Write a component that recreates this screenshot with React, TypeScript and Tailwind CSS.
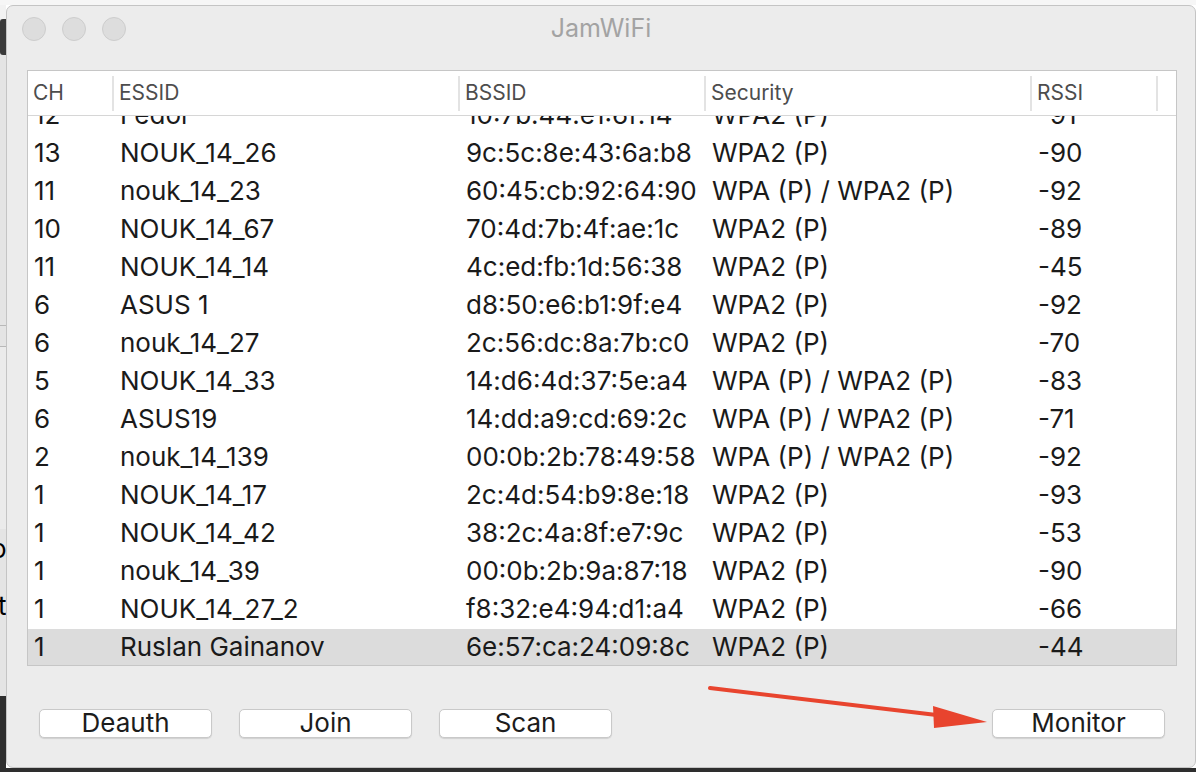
const rows = [
  ['12', 'Fedor', '10:7b:44:e1:6f:14', 'WPA2 (P)', '-91'],
  ['13', 'NOUK_14_26', '9c:5c:8e:43:6a:b8', 'WPA2 (P)', '-90'],
  ['11', 'nouk_14_23', '60:45:cb:92:64:90', 'WPA (P) / WPA2 (P)', '-92'],
  ['10', 'NOUK_14_67', '70:4d:7b:4f:ae:1c', 'WPA2 (P)', '-89'],
  ['11', 'NOUK_14_14', '4c:ed:fb:1d:56:38', 'WPA2 (P)', '-45'],
  ['6', 'ASUS 1', 'd8:50:e6:b1:9f:e4', 'WPA2 (P)', '-92'],
  ['6', 'nouk_14_27', '2c:56:dc:8a:7b:c0', 'WPA2 (P)', '-70'],
  ['5', 'NOUK_14_33', '14:d6:4d:37:5e:a4', 'WPA (P) / WPA2 (P)', '-83'],
  ['6', 'ASUS19', '14:dd:a9:cd:69:2c', 'WPA (P) / WPA2 (P)', '-71'],
  ['2', 'nouk_14_139', '00:0b:2b:78:49:58', 'WPA (P) / WPA2 (P)', '-92'],
  ['1', 'NOUK_14_17', '2c:4d:54:b9:8e:18', 'WPA2 (P)', '-93'],
  ['1', 'NOUK_14_42', '38:2c:4a:8f:e7:9c', 'WPA2 (P)', '-53'],
  ['1', 'nouk_14_39', '00:0b:2b:9a:87:18', 'WPA2 (P)', '-90'],
  ['1', 'NOUK_14_27_2', 'f8:32:e4:94:d1:a4', 'WPA2 (P)', '-66'],
  ['1', 'Ruslan Gainanov', '6e:57:ca:24:09:8c', 'WPA2 (P)', '-44'],
];

const cols = [
  { name: 'CH', w: 'w-[86px]' },
  { name: 'ESSID', w: 'w-[346px]' },
  { name: 'BSSID', w: 'w-[246px]' },
  { name: 'Security', w: 'w-[326px]' },
  { name: 'RSSI', w: 'w-[126px]' },
];

function MacButton({ label }: { label: string }) {
  return (
    <button className="w-[173px] h-[29px] bg-white rounded-[5px] border border-[#c9c9c9] shadow-[0_1px_1px_rgba(0,0,0,0.12)] text-[26px] leading-none text-[#1c1c1c] flex items-center justify-center pb-[1px]">
      {label}
    </button>
  );
}

export default function App() {
  return (
    <div
      className="w-[1196px] h-[772px] overflow-hidden bg-white relative flex flex-col"
      style={{ fontFamily: 'Inter, "Liberation Sans", sans-serif' }}
    >
      <div className="h-[5px] bg-[#f6f6f6]" />
      <div className="flex flex-1">
        {/* what peeks out behind the window */}
        <div className="w-[6px] flex flex-col bg-[#e4e4e4] overflow-hidden">
          <div className="h-[14px] bg-[#f2f2f2]" />
          <div className="h-[36px] bg-[#3a3a3a] rounded-l-[3px]" />
          <div className="h-[270px]" />
          <div className="h-[1px] bg-[#b8b8b8]" />
          <div className="h-[20px]" />
          <div className="h-[1px] bg-[#b8b8b8]" />
          <div className="h-[182px] bg-[#ebebeb]" />
          <div className="h-[57px] text-[26px] leading-[40px] text-black -ml-[9px]">o</div>
          <div className="h-[40px] text-[26px] leading-[40px] text-black -ml-[2px]">t</div>
          <div className="flex-1 bg-[#2e2e2e] mt-[70px]" />
        </div>

        {/* window */}
        <div className="flex-1 flex flex-col">
          <div className="h-[763px] bg-[#ececec] border border-[#c4c4c4] rounded-[7px] flex flex-col">
            <div className="h-[46px] grid grid-cols-[1fr_auto_1fr] items-center px-[15px]">
              <div className="flex gap-[16px]">
                <span className="w-[24px] h-[24px] rounded-full bg-[#dddddd] border border-[#cdcdcd]" />
                <span className="w-[24px] h-[24px] rounded-full bg-[#dddddd] border border-[#cdcdcd]" />
                <span className="w-[24px] h-[24px] rounded-full bg-[#dddddd] border border-[#cdcdcd]" />
              </div>
              <div className="text-[25px] text-[#a3a3a3]">JamWiFi</div>
              <div />
            </div>

            {/* table */}
            <div className="ml-[20px] mt-[18px] w-[1150px] h-[596px] bg-white border border-[#c6c6c6] flex flex-col">
              <div className="h-[45px] flex items-center border-b border-[#d6d6d6] shrink-0">
                {cols.map((c) => (
                  <div key={c.name} className={`${c.w} h-[35px] flex items-center border-r-2 border-[#e3e3e3] pl-[5px] text-[21px] text-[#4d4d4d]`}>
                    {c.name}
                  </div>
                ))}
              </div>
              <div className="flex-1 overflow-hidden">
                <div className="-mt-[19px]">
                  {rows.map((r, i) => (
                    <div
                      key={i}
                      className={`h-[38px] flex items-center pb-[3px] text-[26px] text-[#1a1a1a] ${i === rows.length - 1 ? 'bg-[#dcdcdc]' : ''}`}
                    >
                      {r.map((v, j) => (
                        <div key={j} className={`${cols[j].w} pl-[6px] whitespace-nowrap`}>
                          {v}
                        </div>
                      ))}
                    </div>
                  ))}
                </div>
              </div>
            </div>

            {/* buttons */}
            <div className="flex mt-[43px] pl-[32px] pr-[30px]">
              <div className="flex gap-[27px]">
                <MacButton label="Deauth" />
                <MacButton label="Join" />
                <MacButton label="Scan" />
              </div>
              <div className="flex-1" />
              <MacButton label="Monitor" />
            </div>
          </div>
          <div className="flex-1 bg-[#2e2e2e]" />
        </div>
      </div>

      {/* red annotation arrow */}
      <svg className="absolute left-0 top-0 pointer-events-none" width="1196" height="772">
        <line x1="710" y1="688" x2="945" y2="716" stroke="#e8442e" strokeWidth="4" strokeLinecap="round" />
        <polygon points="987,722 933,706 934,728" fill="#e8442e" />
      </svg>
    </div>
  );
}
